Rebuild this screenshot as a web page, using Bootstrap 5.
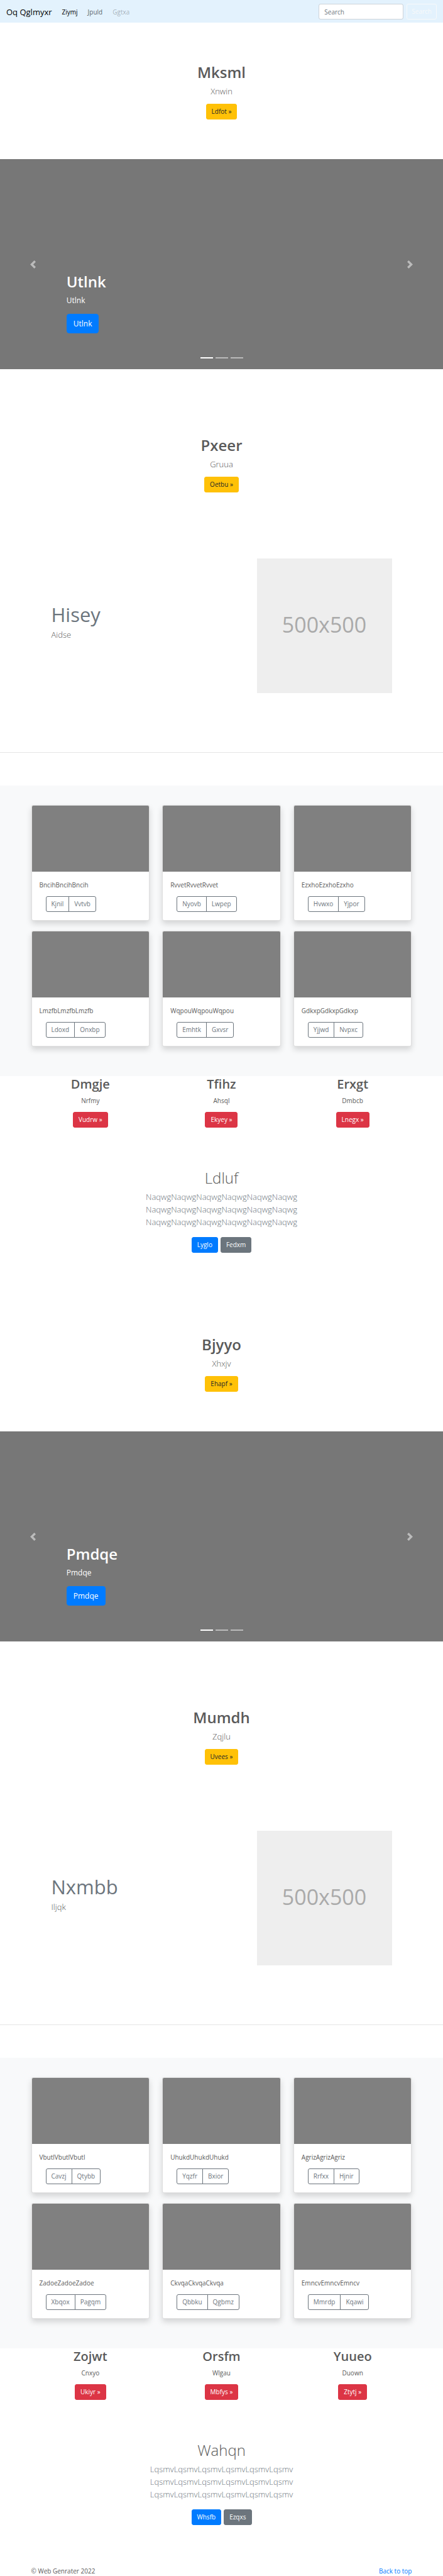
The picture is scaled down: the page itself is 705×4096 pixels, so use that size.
<!DOCTYPE html>
<html lang="en">
<head>
<meta charset="utf-8">
<meta name="viewport" content="width=device-width, initial-scale=1">
<title>Oq Qglmyxr</title>
<link rel="stylesheet" href="https://cdn.jsdelivr.net/npm/bootstrap@5.3.0/dist/css/bootstrap.min.css">
<style>
  body { font-family: "Open Sans", "Noto Sans", sans-serif; font-size: 10px; line-height: 16px; color: #5a5a5a; background: #fff; }
  h1, h2, .intro { color: inherit; }
  h1 { font-size: 24px; line-height: 31px; font-weight: 600; margin-bottom: 5px; }
  h2 { font-size: 20px; line-height: 26px; font-weight: 600; margin-bottom: 5px; }
  p { margin-bottom: 10px; }
  .intro { font-size: 13px; line-height: 20px; font-weight: 300; }
  .wrap { max-width: 626px; margin: 0 auto; padding: 0 10px; }

  .btn { --bs-btn-font-size: 10px; --bs-btn-padding-x: 8px; --bs-btn-padding-y: 3px; --bs-btn-border-radius: 3px; --bs-btn-line-height: 17px; }
  .btn-primary { --bs-btn-bg: #007bff; --bs-btn-border-color: #007bff; }
  .btn-danger { --bs-btn-bg: #dc3545; --bs-btn-border-color: #dc3545; }
  .btn-warning { --bs-btn-color: #212529; }
  .btn-lg { --bs-btn-font-size: 12px; --bs-btn-padding-x: 10px; --bs-btn-padding-y: 5px; --bs-btn-border-radius: 4px; --bs-btn-line-height: 19px; }

  .topbar { background: #e3f2fd; padding: 6px 10px 5px; }
  .topbar .navbar-brand { font-size: 13px; line-height: 20px; padding: 0; margin-right: 8px; }
  .topbar .nav-link { padding: 0 5px; line-height: 16px; }
  .topbar .form-control { width: 135px; height: 25px; font-size: 10px; line-height: 15px; padding: 4px 8px; border: 1px solid #ced4da; border-radius: 3px; margin-right: 5px; }
  .topbar .form-control::placeholder { color: #6c757d; }
  .topbar .btn { --bs-btn-padding-x: 7px; }

  .hero { padding: 63px 20px; text-align: center; }
  .slides { margin-bottom: 42px; }
  .slides .carousel-item { height: 334px; background: #777; }
  .slides .carousel-caption { bottom: 57px; padding: 0; text-align: left; }
  .slides .carousel-caption p { font-size: 12px; line-height: 20px; margin-bottom: 11px; }
  .slides .carousel-caption h1 { color: #fff; }
  .slides .carousel-indicators { margin-bottom: 17px; }
  .slides .carousel-indicators [data-bs-target] { width: 20px; height: 2px; border: 0; margin: 0 2px; }
  .slides .chevron { width: 13px; height: 13px; fill: #fff; }

  .feature { padding: 42px 42px 94px; }
  .feature h2 { font-size: 31px; line-height: 33px; font-weight: 400; color: #6c757d; }
  .placeholder-box { flex: 0 0 215px; height: 214px; background: #eee; color: #aaa; font-size: 34px; line-height: 40px; }
  .rule { margin: 0 0 52px; border-top: 1px solid #e5e5e5; opacity: 1; }

  .album { background: #f8f9fa; padding: 31px 0; }
  .album .row { --bs-gutter-x: 20px; }
  .album .card { margin-bottom: 16px; border: 1px solid rgba(0,0,0,.125); border-radius: 3px; box-shadow: 0 5px 10px rgba(0,0,0,.15); color: inherit; }
  .album .thumb { height: 105px; background: #808080; border-radius: 2px 2px 0 0; }
  .album .card-body { padding: 13px 12px; }
  .album .btn-group { margin-left: 10px; }
  .trio { --bs-gutter-x: 20px; }
  .closing { padding-top: 64px; text-align: center; }
  .closing h1 { font-weight: 300; }
  .closing .intro { margin-bottom: 14px; color: #6c757d; }
  .actions { gap: 4px; }
  .next-part { margin-top: 67px; }
  .page-end { margin-top: 65px; }
  .page-end a { color: #007bff; text-decoration: none; }
</style>
</head>
<body id="top">

<nav class="navbar navbar-expand topbar">
  <a class="navbar-brand" href="#">Oq Qglmyxr</a>
  <ul class="navbar-nav me-auto">
    <li class="nav-item"><a class="nav-link active" href="#">Ziymj</a></li>
    <li class="nav-item"><a class="nav-link" href="#">Jpuld</a></li>
    <li class="nav-item"><a class="nav-link disabled" href="#" aria-disabled="true">Ggtxa</a></li>
  </ul>
  <form class="d-flex" role="search">
    <input class="form-control" type="search" placeholder="Search" aria-label="Search">
    <button class="btn btn-outline-light" type="button">Search</button>
  </form>
</nav>

<main>
  <section class="hero">
    <h1>Mksml</h1>
    <p class="intro">Xnwin</p>
    <a class="btn btn-warning" href="#">Ldfot »</a>
  </section>

  <div id="slides-a" class="carousel slide slides">
    <div class="carousel-indicators">
      <button type="button" data-bs-target="#slides-a" data-bs-slide-to="0" class="active" aria-current="true" aria-label="Slide 1"></button>
      <button type="button" data-bs-target="#slides-a" data-bs-slide-to="1" aria-label="Slide 2"></button>
      <button type="button" data-bs-target="#slides-a" data-bs-slide-to="2" aria-label="Slide 3"></button>
    </div>
    <div class="carousel-inner">
      <div class="carousel-item active">
        <div class="carousel-caption">
          <h1>Utlnk</h1>
          <p>Utlnk</p>
          <a class="btn btn-lg btn-primary" href="#">Utlnk</a>
        </div>
      </div>
      <div class="carousel-item"></div>
      <div class="carousel-item"></div>
    </div>
    <button class="carousel-control-prev" type="button" data-bs-target="#slides-a" data-bs-slide="prev" aria-label="Previous">
      <svg class="chevron" viewBox="0 0 8 8"><path d="M5.25 0l-4 4 4 4 1.5-1.5L4.25 4l2.5-2.5L5.25 0z"/></svg>
    </button>
    <button class="carousel-control-next" type="button" data-bs-target="#slides-a" data-bs-slide="next" aria-label="Next">
      <svg class="chevron" viewBox="0 0 8 8"><path d="M2.75 0l-1.5 1.5L3.75 4l-2.5 2.5L2.75 8l4-4-4-4z"/></svg>
    </button>
  </div>

  <section class="hero">
    <h1>Pxeer</h1>
    <p class="intro">Gruua</p>
    <a class="btn btn-warning" href="#">Oetbu »</a>
  </section>

  <section class="wrap feature d-flex align-items-center justify-content-between">
    <div>
      <h2>Hisey</h2>
      <p class="intro">Aidse</p>
    </div>
    <div class="placeholder-box d-flex align-items-center justify-content-center pb-1">500x500</div>
  </section>
  <hr class="rule">

  <section class="album">
    <div class="wrap">
      <div class="row row-cols-3">
        <div class="col"><div class="card"><div class="thumb"></div><div class="card-body"><p>BncihBncihBncih</p><div class="btn-group"><button type="button" class="btn btn-outline-secondary">Kjnil</button><button type="button" class="btn btn-outline-secondary">Vvtvb</button></div></div></div></div>
        <div class="col"><div class="card"><div class="thumb"></div><div class="card-body"><p>RvvetRvvetRvvet</p><div class="btn-group"><button type="button" class="btn btn-outline-secondary">Nyovb</button><button type="button" class="btn btn-outline-secondary">Lwpep</button></div></div></div></div>
        <div class="col"><div class="card"><div class="thumb"></div><div class="card-body"><p>EzxhoEzxhoEzxho</p><div class="btn-group"><button type="button" class="btn btn-outline-secondary">Hvwxo</button><button type="button" class="btn btn-outline-secondary">Yjpor</button></div></div></div></div>
        <div class="col"><div class="card"><div class="thumb"></div><div class="card-body"><p>LmzfbLmzfbLmzfb</p><div class="btn-group"><button type="button" class="btn btn-outline-secondary">Ldoxd</button><button type="button" class="btn btn-outline-secondary">Onxbp</button></div></div></div></div>
        <div class="col"><div class="card"><div class="thumb"></div><div class="card-body"><p>WqpouWqpouWqpou</p><div class="btn-group"><button type="button" class="btn btn-outline-secondary">Emhtk</button><button type="button" class="btn btn-outline-secondary">Gxvsr</button></div></div></div></div>
        <div class="col"><div class="card"><div class="thumb"></div><div class="card-body"><p>GdkxpGdkxpGdkxp</p><div class="btn-group"><button type="button" class="btn btn-outline-secondary">Yjjwd</button><button type="button" class="btn btn-outline-secondary">Nvpxc</button></div></div></div></div>
      </div>
    </div>
  </section>

  <section class="wrap">
    <div class="row row-cols-3 trio text-center">
      <div class="col"><h2>Dmgje</h2><p>Nrfmy</p><a class="btn btn-danger" href="#">Vudrw »</a></div>
      <div class="col"><h2>Tfihz</h2><p>Ahsql</p><a class="btn btn-danger" href="#">Ekyey »</a></div>
      <div class="col"><h2>Erxgt</h2><p>Dmbcb</p><a class="btn btn-danger" href="#">Lnegx »</a></div>
    </div>
  </section>

  <section class="wrap closing">
    <h1>Ldluf</h1>
    <p class="intro">NaqwgNaqwgNaqwgNaqwgNaqwgNaqwg<br>NaqwgNaqwgNaqwgNaqwgNaqwgNaqwg<br>NaqwgNaqwgNaqwgNaqwgNaqwgNaqwg</p>
    <div class="d-flex justify-content-center actions">
      <a class="btn btn-primary" href="#">Lyglo</a>
      <a class="btn btn-secondary" href="#">Fedxm</a>
    </div>
  </section>

  <section class="hero next-part">
    <h1>Bjyyo</h1>
    <p class="intro">Xhxjv</p>
    <a class="btn btn-warning" href="#">Ehapf »</a>
  </section>

  <div id="slides-b" class="carousel slide slides">
    <div class="carousel-indicators">
      <button type="button" data-bs-target="#slides-b" data-bs-slide-to="0" class="active" aria-current="true" aria-label="Slide 1"></button>
      <button type="button" data-bs-target="#slides-b" data-bs-slide-to="1" aria-label="Slide 2"></button>
      <button type="button" data-bs-target="#slides-b" data-bs-slide-to="2" aria-label="Slide 3"></button>
    </div>
    <div class="carousel-inner">
      <div class="carousel-item active">
        <div class="carousel-caption">
          <h1>Pmdqe</h1>
          <p>Pmdqe</p>
          <a class="btn btn-lg btn-primary" href="#">Pmdqe</a>
        </div>
      </div>
      <div class="carousel-item"></div>
      <div class="carousel-item"></div>
    </div>
    <button class="carousel-control-prev" type="button" data-bs-target="#slides-b" data-bs-slide="prev" aria-label="Previous">
      <svg class="chevron" viewBox="0 0 8 8"><path d="M5.25 0l-4 4 4 4 1.5-1.5L4.25 4l2.5-2.5L5.25 0z"/></svg>
    </button>
    <button class="carousel-control-next" type="button" data-bs-target="#slides-b" data-bs-slide="next" aria-label="Next">
      <svg class="chevron" viewBox="0 0 8 8"><path d="M2.75 0l-1.5 1.5L3.75 4l-2.5 2.5L2.75 8l4-4-4-4z"/></svg>
    </button>
  </div>

  <section class="hero">
    <h1>Mumdh</h1>
    <p class="intro">Zqjlu</p>
    <a class="btn btn-warning" href="#">Uvees »</a>
  </section>

  <section class="wrap feature d-flex align-items-center justify-content-between">
    <div>
      <h2>Nxmbb</h2>
      <p class="intro">Iljqk</p>
    </div>
    <div class="placeholder-box d-flex align-items-center justify-content-center pb-1">500x500</div>
  </section>
  <hr class="rule">

  <section class="album">
    <div class="wrap">
      <div class="row row-cols-3">
        <div class="col"><div class="card"><div class="thumb"></div><div class="card-body"><p>VbutlVbutlVbutl</p><div class="btn-group"><button type="button" class="btn btn-outline-secondary">Cavzj</button><button type="button" class="btn btn-outline-secondary">Qtybb</button></div></div></div></div>
        <div class="col"><div class="card"><div class="thumb"></div><div class="card-body"><p>UhukdUhukdUhukd</p><div class="btn-group"><button type="button" class="btn btn-outline-secondary">Yqzfr</button><button type="button" class="btn btn-outline-secondary">Bxior</button></div></div></div></div>
        <div class="col"><div class="card"><div class="thumb"></div><div class="card-body"><p>AgrizAgrizAgriz</p><div class="btn-group"><button type="button" class="btn btn-outline-secondary">Rrfxx</button><button type="button" class="btn btn-outline-secondary">Hjnir</button></div></div></div></div>
        <div class="col"><div class="card"><div class="thumb"></div><div class="card-body"><p>ZadoeZadoeZadoe</p><div class="btn-group"><button type="button" class="btn btn-outline-secondary">Xbqox</button><button type="button" class="btn btn-outline-secondary">Pagqm</button></div></div></div></div>
        <div class="col"><div class="card"><div class="thumb"></div><div class="card-body"><p>CkvqaCkvqaCkvqa</p><div class="btn-group"><button type="button" class="btn btn-outline-secondary">Qbbku</button><button type="button" class="btn btn-outline-secondary">Qgbmz</button></div></div></div></div>
        <div class="col"><div class="card"><div class="thumb"></div><div class="card-body"><p>EmncvEmncvEmncv</p><div class="btn-group"><button type="button" class="btn btn-outline-secondary">Mmrdp</button><button type="button" class="btn btn-outline-secondary">Kqawi</button></div></div></div></div>
      </div>
    </div>
  </section>

  <section class="wrap">
    <div class="row row-cols-3 trio text-center">
      <div class="col"><h2>Zojwt</h2><p>Cnxyo</p><a class="btn btn-danger" href="#">Ukiyr »</a></div>
      <div class="col"><h2>Orsfm</h2><p>Wlgau</p><a class="btn btn-danger" href="#">Mbfys »</a></div>
      <div class="col"><h2>Yuueo</h2><p>Duown</p><a class="btn btn-danger" href="#">Ztytj »</a></div>
    </div>
  </section>

  <section class="wrap closing">
    <h1>Wahqn</h1>
    <p class="intro">LqsmvLqsmvLqsmvLqsmvLqsmvLqsmv<br>LqsmvLqsmvLqsmvLqsmvLqsmvLqsmv<br>LqsmvLqsmvLqsmvLqsmvLqsmvLqsmv</p>
    <div class="d-flex justify-content-center actions">
      <a class="btn btn-primary" href="#">Whsfb</a>
      <a class="btn btn-secondary" href="#">Ezqxs</a>
    </div>
  </section>
</main>

<footer class="wrap page-end d-flex justify-content-between">
  <span>© Web Genrater 2022</span>
  <a href="#top">Back to top</a>
</footer>

<script src="https://cdn.jsdelivr.net/npm/bootstrap@5.3.0/dist/js/bootstrap.bundle.min.js"></script>
</body>
</html>
